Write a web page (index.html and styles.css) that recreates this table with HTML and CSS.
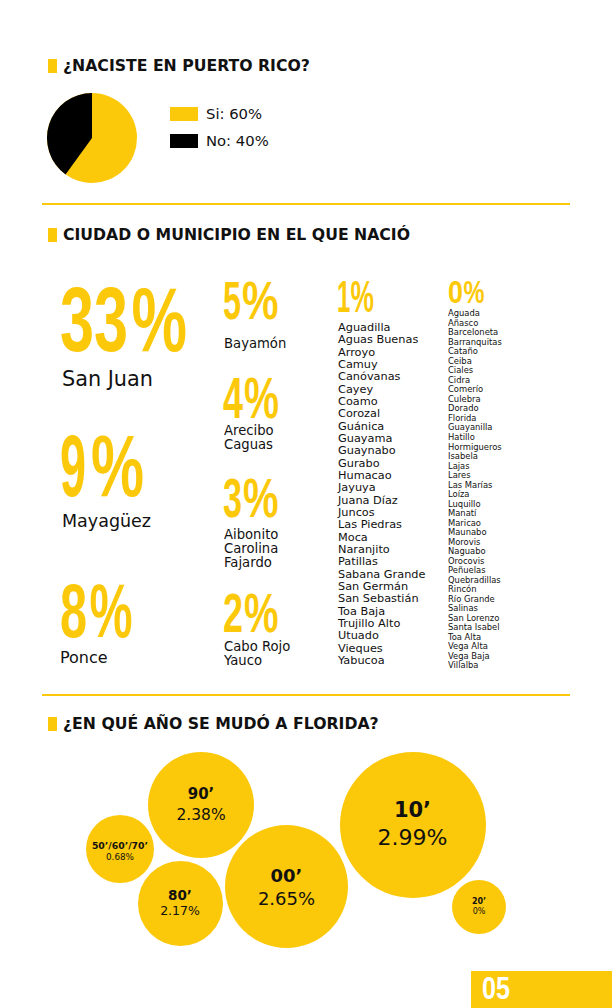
FILE: index.html
```html
<!DOCTYPE html>
<html lang="es">
<head>
<meta charset="utf-8">
<title>Puerto Rico</title>
<link rel="stylesheet" href="styles.css">
</head>
<body>
<main class="page">
  <section class="intro">
    <h2 class="title"><span class="mark"></span>¿NACISTE EN PUERTO RICO?</h2>
    <div class="pie-row">
      <svg class="pie" width="90" height="90" viewBox="0 0 90 90">
        <circle cx="45" cy="45" r="45" class="pie-si"/>
        <path d="M45 45 L45 0 A45 45 0 0 0 18.55 81.41 Z" class="pie-no"/>
      </svg>
      <ul class="legend">
        <li><span class="swatch si"></span>Si: 60%</li>
        <li><span class="swatch no"></span>No: 40%</li>
      </ul>
    </div>
  </section>

  <hr class="rule">

  <section class="cities">
    <h2 class="title"><span class="mark"></span>CIUDAD O MUNICIPIO EN EL QUE NACIÓ</h2>
    <div class="cols">
      <div class="col c1">
        <svg class="num n33" width="127" height="64" viewBox="0 0 127 64"><text y="63" font-size="90" transform="scale(0.6795 1)">33</text><text y="63" font-size="90" transform="translate(71.5 0) scale(0.6937 1)">%</text></svg>
        <p class="city big l-sj">San Juan</p>
        <svg class="num n9" width="84" height="62" viewBox="0 0 84 62"><text y="61" font-size="87" transform="scale(0.5375 1)">9</text><text y="61" font-size="87" transform="translate(31 0) scale(0.6853 1)">%</text></svg>
        <p class="city mid l-my">Mayagüez</p>
        <svg class="num n8" width="73" height="54" viewBox="0 0 73 54"><text y="53" font-size="76" transform="scale(0.639 1)">8</text><text y="53" font-size="76" transform="translate(29.5 0) scale(0.6364 1)">%</text></svg>
        <p class="city sm l-po">Ponce</p>
      </div>
      <div class="col c2">
        <svg class="num n5" width="55" height="38" viewBox="0 0 55 38"><text y="37.3" font-size="53.5" transform="scale(0.605 1)">5</text><text y="37.3" font-size="53.5" transform="translate(19 0) scale(0.7675 1)">%</text></svg>
        <p class="city xs l-ba">Bayamón</p>
        <svg class="num n4" width="56" height="41" viewBox="0 0 56 41"><text y="40.5" font-size="57.5" transform="scale(0.6256 1)">4</text><text y="40.5" font-size="57.5" transform="translate(21 0) scale(0.6847 1)">%</text></svg>
        <p class="city xs l-ar"><span class="ln">Arecibo</span><span class="ln">Caguas</span></p>
        <svg class="num n3" width="55" height="40" viewBox="0 0 55 40"><text y="39.3" font-size="56" transform="scale(0.6102 1)">3</text><text y="39.3" font-size="56" transform="translate(20 0) scale(0.7131 1)">%</text></svg>
        <p class="city xs l-ai"><span class="ln">Aibonito</span><span class="ln">Carolina</span><span class="ln">Fajardo</span></p>
        <svg class="num n2" width="55" height="39" viewBox="0 0 55 39"><text y="38.5" font-size="55" transform="scale(0.654 1)">2</text><text y="38.5" font-size="55" transform="translate(21 0) scale(0.7055 1)">%</text></svg>
        <p class="city xs l-ca"><span class="ln">Cabo Rojo</span><span class="ln">Yauco</span></p>
      </div>
      <div class="col c3">
        <svg class="num n1" width="36" height="31" viewBox="0 0 36 31"><text y="30.6" font-size="43.5" transform="translate(-1 0) scale(0.55 1)">1</text><text y="30.6" font-size="43.5" transform="translate(12.5 0) scale(0.6077 1)">%</text></svg>
        <ul class="list l1">
          <li>Aguadilla</li><li>Aguas Buenas</li><li>Arroyo</li><li>Camuy</li><li>Canóvanas</li><li>Cayey</li><li>Coamo</li><li>Corozal</li><li>Guánica</li><li>Guayama</li><li>Guaynabo</li><li>Gurabo</li><li>Humacao</li><li>Jayuya</li><li>Juana Díaz</li><li>Juncos</li><li>Las Piedras</li><li>Moca</li><li>Naranjito</li><li>Patillas</li><li>Sabana Grande</li><li>San Germán</li><li>San Sebastián</li><li>Toa Baja</li><li>Trujillo Alto</li><li>Utuado</li><li>Vieques</li><li>Yabucoa</li>
        </ul>
      </div>
      <div class="col c4">
        <svg class="num n0" width="36" height="23" viewBox="0 0 36 23"><text y="22.6" font-size="32" transform="scale(0.843 1)">0</text><text y="22.6" font-size="32" transform="translate(15.5 0) scale(0.738 1)">%</text></svg>
        <ul class="list l0">
          <li>Aguada</li><li>Añasco</li><li>Barceloneta</li><li>Barranquitas</li><li>Cataño</li><li>Ceiba</li><li>Ciales</li><li>Cidra</li><li>Comerío</li><li>Culebra</li><li>Dorado</li><li>Florida</li><li>Guayanilla</li><li>Hatillo</li><li>Hormigueros</li><li>Isabela</li><li>Lajas</li><li>Lares</li><li>Las Marías</li><li>Loíza</li><li>Luquillo</li><li>Manatí</li><li>Maricao</li><li>Maunabo</li><li>Morovis</li><li>Naguabo</li><li>Orocovis</li><li>Peñuelas</li><li>Quebradillas</li><li>Rincón</li><li>Río Grande</li><li>Salinas</li><li>San Lorenzo</li><li>Santa Isabel</li><li>Toa Alta</li><li>Vega Alta</li><li>Vega Baja</li><li>Villalba</li>
        </ul>
      </div>
    </div>
  </section>

  <hr class="rule">

  <section class="years">
    <h2 class="title"><span class="mark"></span>¿EN QUÉ AÑO SE MUDÓ A FLORIDA?</h2>
    <div class="bubbles">
      <div class="bubble b90"><b class="yr">90’</b><span class="pc">2.38%</span></div>
      <div class="bubble b10"><b class="yr">10’</b><span class="pc">2.99%</span></div>
      <div class="bubble b50"><b class="yr">50’/60’/70’</b><span class="pc">0.68%</span></div>
      <div class="bubble b00"><b class="yr">00’</b><span class="pc">2.65%</span></div>
      <div class="bubble b80"><b class="yr">80’</b><span class="pc">2.17%</span></div>
      <div class="bubble b20"><b class="yr">20’</b><span class="pc">0%</span></div>
    </div>
  </section>
</main>
<footer class="foot">
  <div class="pagenum">
    <svg class="num pn" width="26" height="22" viewBox="0 0 26 22"><text y="21.7" font-size="31" transform="translate(-1 0) scale(0.8123 1)">05</text></svg>
  </div>
</footer>
</body>
</html>
```
FILE: styles.css
```css
* { box-sizing: border-box; }
html, body { margin: 0; padding: 0; }
body {
  width: 612px;
  height: 1008px;
  overflow: hidden;
  background: #fff;
  color: #111;
  font-family: "DejaVu Sans", "Liberation Sans", sans-serif;
}

.page { padding: 57.5px 42px 0; }

.title {
  display: flex;
  align-items: center;
  gap: 6px;
  height: 16px;
  margin: 0 0 0 6px;
  font-size: 15.7px;
  line-height: 16px;
  font-weight: 700;
  white-space: nowrap;
  color: #111;
}
.mark { flex: none; width: 9px; height: 14px; background: #fcc80a; }

.rule { height: 2px; margin: 0; border: 0; background: #fcc80a; }

/* section 1 */
.pie-row { display: flex; align-items: flex-start; margin-top: 19.5px; height: 90px; margin-bottom: 20px; }
.pie { display: block; margin-left: 5px; }
.pie-si { fill: #fcc80a; }
.pie-no { fill: #000; }
.legend { list-style: none; margin: 0 0 0 33px; padding: 14px 0 0; }
.legend li { display: flex; align-items: center; gap: 8px; height: 14px; font-size: 14.8px; line-height: 14px; color: #111; }
.legend li + li { margin-top: 13px; }
.swatch { width: 28px; height: 14px; }
.swatch.si { background: #fcc80a; }
.swatch.no { background: #000; }

/* section 2 */
.cities .title { margin-top: 22.3px; }
.cols { display: flex; margin: 36.7px 0 0 18px; height: 414px; }
.col { display: flex; flex-direction: column; align-items: flex-start; }
.c1 { width: 163px; }
.c2 { width: 115px; }
.c3 { width: 110px; }
.c4 { flex: 1; }

.num { display: block; overflow: visible; flex: none; }
.num text { font-family: "Liberation Sans", Arial, sans-serif; font-weight: 700; fill: #fcc80a; }

.city { margin: 0; color: #111; white-space: nowrap; }
.city .ln { display: block; }
.city.big { font-size: 20.8px; line-height: 21px; margin-left: 2px; }
.city.mid { font-size: 17.5px; line-height: 18px; margin-left: 2px; }
.city.sm { font-size: 16px; line-height: 16px; }
.city.xs { font-size: 13.2px; line-height: 14px; margin-left: 1px; }

.n33 { margin-top: 8px; }
.l-sj { margin-top: 17.3px; }
.n9 { margin-top: 44.7px; }
.l-my { margin-top: 14.9px; }
.n8 { margin-top: 54.1px; }
.l-po { margin-top: 12.5px; }

.n5 { margin-top: 2px; }
.l-ba { margin-top: 17.4px; }
.n4 { margin-top: 26.1px; }
.l-ar { margin-top: 5.9px; }
.n3 { margin-top: 25.6px; }
.l-ai { margin-top: 10.4px; }
.n2 { margin-top: 22.6px; }
.l-ca { margin-top: 8.4px; }

.n1 { margin-top: 1px; }
.n0 { margin-top: 0; }

.list { list-style: none; margin: 0; padding: 0; color: #111; white-space: nowrap; }
.l1 { margin-top: 9.9px; font-size: 11.3px; line-height: 12.35px; }
.l0 { margin-top: 6.3px; font-size: 8.4px; line-height: 9.51px; }

/* section 3 */
.years .title { margin-top: 20px; }
.bubbles { position: relative; height: 239px; }
.bubble {
  position: absolute;
  display: flex;
  flex-direction: column;
  align-items: center;
  justify-content: center;
  border-radius: 50%;
  background: #fcc80a;
  color: #111;
  text-align: center;
  line-height: 1.3;
  white-space: nowrap;
}
.bubble .yr { font-weight: 700; }
.bubble .pc { font-weight: 400; }

.b50 { left: 44px; top: 83px; width: 68px; height: 68px; padding-top: 6px; }
.b50 .yr { font-size: 9.3px; }
.b50 .pc { font-size: 8.8px; }

.b90 { left: 106px; top: 20px; width: 106px; height: 106px; }
.b90 .yr { font-size: 15px; }
.b90 .pc { font-size: 15.5px; }

.b80 { left: 95.5px; top: 129px; width: 85px; height: 85px; line-height: 1.18; }
.b80 .yr { font-size: 13.5px; }
.b80 .pc { font-size: 12.5px; }

.b00 { left: 183px; top: 93.5px; width: 123px; height: 123px; }
.b00 .yr { font-size: 18px; }
.b00 .pc { font-size: 18px; }

.b10 { left: 297.5px; top: 20px; width: 146px; height: 146px; }
.b10 .yr { font-size: 21px; }
.b10 .pc { font-size: 22px; }

.b20 { left: 410px; top: 148px; width: 54px; height: 54px; }
.b20 .yr { font-size: 8px; }
.b20 .pc { font-size: 8px; }

/* footer */
.foot { display: flex; justify-content: flex-end; }
.pagenum { width: 141px; height: 37px; padding: 6px 0 0 12px; background: #fcc80a; }
.pn text { fill: #fff; }
```
